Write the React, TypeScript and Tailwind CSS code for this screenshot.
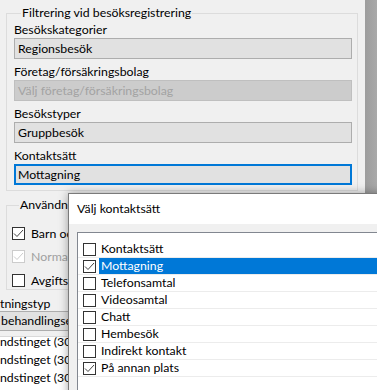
import React from "react";

function Check({ color = "#333333" }: { color?: string }) {
  return (
    <svg width="11" height="11" viewBox="0 0 11 11" className="block">
      <polyline points="1,5.5 4,8.5 10,2" fill="none" stroke={color} strokeWidth="1" />
    </svg>
  );
}

function Box({ checked, disabled }: { checked?: boolean; disabled?: boolean }) {
  return (
    <div
      className={
        disabled
          ? "w-[13px] h-[13px] shrink-0 border border-[#cccccc] bg-white flex items-center justify-center"
          : "w-[13px] h-[13px] shrink-0 border border-[#333333] bg-white flex items-center justify-center"
      }
    >
      {checked ? <Check color={disabled ? "#cccccc" : "#444444"} /> : null}
    </div>
  );
}

function Field({ text, kind }: { text: string; kind: "ro" | "dis" | "focus" }) {
  const cls =
    kind === "ro"
      ? "h-[21px] border border-[#adadad] bg-[#e1e1e1] pl-[3px] flex items-center text-black"
      : kind === "dis"
      ? "h-[21px] border border-[#bfbfbf] bg-[#cccccc] pl-[3px] flex items-center text-[#a3a3a3]"
      : "h-[21px] border-2 border-[#0078d7] bg-[#e1e1e1] pl-[2px] flex items-center text-black";
  return (
    <div className={cls}>
      <span className="leading-[16px]">{text}</span>
    </div>
  );
}

function Unit({ label, text, kind, first }: { label: string; text: string; kind: "ro" | "dis" | "focus"; first?: boolean }) {
  return (
    <div className={first ? "" : "mt-[4px]"}>
      <div className="leading-[16px] h-[17px] pt-[1px]">{label}</div>
      <Field text={text} kind={kind} />
    </div>
  );
}

const items: { label: string; checked: boolean; selected?: boolean }[] = [
  { label: "Kontaktsätt", checked: false },
  { label: "Mottagning", checked: true, selected: true },
  { label: "Telefonsamtal", checked: false },
  { label: "Videosamtal", checked: false },
  { label: "Chatt", checked: false },
  { label: "Hembesök", checked: false },
  { label: "Indirekt kontakt", checked: false },
  { label: "På annan plats", checked: true },
];

export default function App() {
  return (
    <div
      className="relative w-[377px] h-[390px] overflow-hidden bg-[#f0f0f0] text-[12.3px] text-black"
      style={{ fontFamily: 'Lato, "Liberation Sans", sans-serif' }}
    >
      <div className="flex h-full">
        <div className="w-[365px] shrink-0">
          <fieldset className="ml-[6px] mt-[5px] w-[352px] border border-[#dcdcdc] pl-[7px] pr-[5px] pb-[5px]">
            <legend className="ml-[7px] px-[1px] leading-[16px]">Filtrering vid besöksregistrering</legend>
            <Unit first label="Besökskategorier" text="Regionsbesök" kind="ro" />
            <Unit label="Företag/försäkringsbolag" text="Välj företag/försäkringsbolag" kind="dis" />
            <Unit label="Besökstyper" text="Gruppbesök" kind="ro" />
            <Unit label="Kontaktsätt" text="Mottagning" kind="focus" />
          </fieldset>

          <fieldset className="ml-[6px] mt-[6px] w-[352px] border border-[#dcdcdc] pl-[5px] pb-[2px]">
            <legend className="ml-[7px] px-[1px] leading-[16px] whitespace-nowrap">Användnin</legend>
            <div className="mt-[14px] flex items-center gap-[6px] h-[13px]">
              <Box checked />
              <span className="leading-[16px] whitespace-nowrap">Barn oc</span>
            </div>
            <div className="mt-[10px] flex items-center gap-[6px] h-[13px]">
              <Box checked disabled />
              <span className="leading-[16px] text-[#a0a0a0] whitespace-nowrap">Normal</span>
            </div>
            <div className="mt-[11px] flex items-center gap-[6px] h-[13px]">
              <Box />
              <span className="leading-[16px] whitespace-nowrap">Avgiftsb</span>
            </div>
          </fieldset>

          <div className="mt-[6px] h-[15px] leading-[16px] whitespace-nowrap">tningstyp</div>
          <div className="w-[68px] h-[20px] border-y border-[#adadad] bg-[#e1e1e1] flex items-center whitespace-nowrap">
            <span className="leading-[16px] pl-[1px]">behandlingse</span>
          </div>
          <div className="w-[68px] h-[6px] border-b border-[#d9d9d9] bg-[#f0f0f0]" />
          <div className="w-[68px] bg-white h-[60px]">
            <div className="h-[18px] leading-[10px] whitespace-nowrap">ndstinget (301</div>
            <div className="h-[18px] leading-[10px] whitespace-nowrap">ndstinget (301</div>
            <div className="h-[18px] leading-[10px] whitespace-nowrap">ndstinget (301</div>
          </div>
        </div>
        <div className="w-[12px] shrink-0 h-full bg-gradient-to-r from-[#9d9d9d] to-[#a9a9a9]" />
      </div>

      {/* dialog */}
      <div className="absolute left-[68px] top-[193px] w-[330px] h-[220px] border border-[#7a7a7a] bg-[#f0f0f0] shadow-[0_0_9px_rgba(0,0,0,0.35)]">
        <div className="h-[30px] bg-white pl-[8px] flex items-center">
          <span className="leading-[16px]">Välj kontaktsätt</span>
        </div>
        <div className="pl-[8px] pt-[8px]">
          <div className="border-l border-t border-[#828790] bg-white pt-[8px] h-[200px]">
            {items.map((it) => (
              <div key={it.label} className="h-[17px] border-b border-[#ececec] flex items-start">
                <div className="ml-[5px] mt-[2px]">
                  <Box checked={it.checked} />
                </div>
                <div
                  className={
                    it.selected
                      ? "ml-[3px] flex-1 h-[16px] bg-[#0078d7] text-white pl-[2px] leading-[16px] whitespace-nowrap"
                      : "ml-[3px] flex-1 h-[16px] pl-[2px] leading-[16px] whitespace-nowrap"
                  }
                >
                  {it.label}
                </div>
              </div>
            ))}
          </div>
        </div>
      </div>
    </div>
  );
}
